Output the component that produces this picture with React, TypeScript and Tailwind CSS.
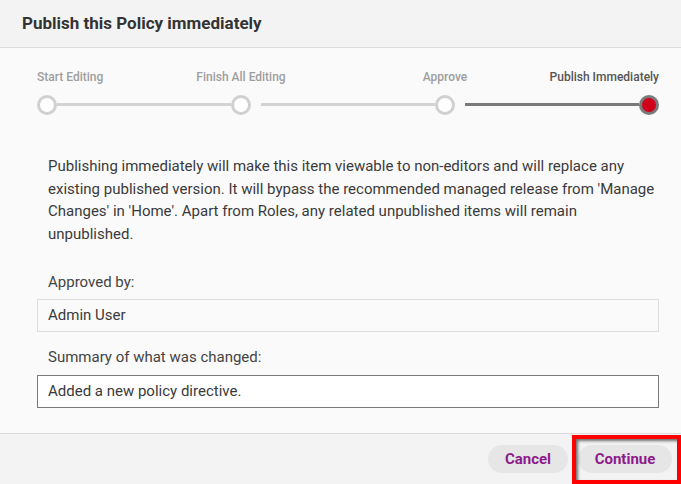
import React from "react";

const steps = [
  { label: "Start Editing", align: "items-start" },
  { label: "Finish All Editing", align: "items-center" },
  { label: "Approve", align: "items-center" },
  { label: "Publish Immediately", align: "items-end" },
];

function Stepper() {
  return (
    <div className="flex items-end pt-[21px]">
      {steps.map((s, i) => {
        const last = i === steps.length - 1;
        return (
          <React.Fragment key={s.label}>
            {i > 0 && (
              <div
                className={
                  "flex-1 h-[3px] mb-[9px] " +
                  (i === 1 ? "" : "ml-[10px] ") +
                  (last ? "bg-[#7a7a7a]" : "bg-[#d3d3d3]")
                }
              />
            )}
            <div className={"flex flex-col w-[20px] " + s.align}>
              <span
                className={
                  "whitespace-nowrap text-[12px] leading-[16px] font-medium " +
                  (last ? "text-[#555]" : "text-[#9e9e9e]")
                }
              >
                {s.label}
              </span>
              <span
                className={
                  "mt-[10px] w-[20px] h-[20px] rounded-full border-[3px] " +
                  (last ? "border-[#7a7a7a] bg-[#d0021b]" : "border-[#d0d0d0] bg-white")
                }
              />
            </div>
          </React.Fragment>
        );
      })}
    </div>
  );
}

export default function App() {
  return (
    <div
      className="relative w-[681px] h-[484px] bg-[#fafafa] flex flex-col text-[#3a3a3a]"
      style={{ fontFamily: "Roboto, 'Liberation Sans', sans-serif" }}
    >
      <div className="h-[48px] shrink-0 bg-[#f3f3f3] border-b border-[#dcdcdc] px-[22px] flex items-center">
        <h1 className="text-[17px] font-bold text-[#333]">Publish this Policy immediately</h1>
      </div>

      <div className="flex-1 pl-[37px] pr-[22px]">
        <Stepper />

        <p className="mt-[40px] pl-[11px] text-[15px] leading-[22.5px] text-[#3a3a3a]">
          Publishing immediately will make this item viewable to non-editors and will replace any
          existing published version. It will bypass the recommended managed release from 'Manage
          Changes' in 'Home'. Apart from Roles, any related unpublished items will remain
          unpublished.
        </p>

        <label className="block mt-[26px] pl-[11px] text-[15px] leading-[22px] text-[#444]">
          Approved by:
        </label>
        <div className="mt-[6px] h-[33px] border border-[#dedede] bg-[#fafafa] px-[10px] flex items-center text-[15px] text-[#3a3a3a]">
          Admin User
        </div>

        <label className="block mt-[14px] pl-[11px] text-[15px] leading-[22px] text-[#444]">
          Summary of what was changed:
        </label>
        <div className="mt-[7px] h-[33px] border border-[#7a7a7a] bg-white px-[10px] flex items-center text-[15px] text-[#3a3a3a]">
          Added a new policy directive.
        </div>
      </div>

      <div className="h-[51px] shrink-0 bg-[#f3f3f3] border-t border-[#dcdcdc] flex items-center justify-end gap-[10px] pr-[9px]">
        <button className="h-[28px] w-[80px] rounded-full bg-[#e6e6e6] text-[15px] font-bold text-[#8e1a8c]">
          Cancel
        </button>
        <button className="h-[28px] w-[94px] rounded-full bg-[#e6e6e6] text-[15px] font-bold text-[#8e1a8c]">
          Continue
        </button>
      </div>

      <div className="absolute left-[572px] top-[435px] w-[109px] h-[49px] border-4 border-[#ff0000] shadow-[inset_2px_2px_3px_rgba(0,0,0,0.55)] pointer-events-none" />
    </div>
  );
}
